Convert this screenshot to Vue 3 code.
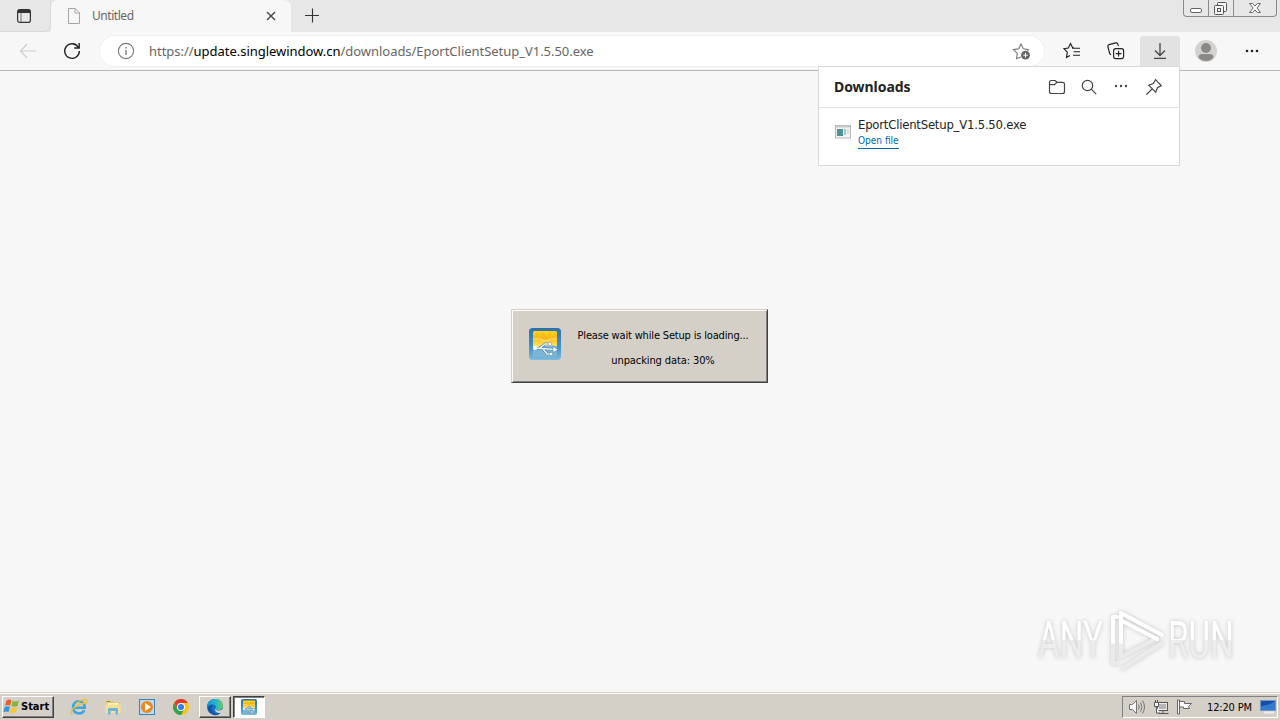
<template>
  <div class="desktop">
    <header class="tab-strip">
      <div class="tab-actions">
        <svg width="16" height="16" viewBox="0 0 16 16">
          <rect x="1.6" y="1.6" width="12.8" height="12.8" rx="2.2" fill="none" stroke="#333" stroke-width="1.2" />
          <path d="M1.5 5V3.5a2 2 0 0 1 2-2h9a2 2 0 0 1 2 2V5z" fill="#333" />
          <path d="M5 5v9" stroke="#777" stroke-width="1" />
        </svg>
      </div>
      <div class="tab">
        <svg class="page-icon" width="14" height="16" viewBox="0 0 14 16" fill="none" stroke="#a5a5a5">
          <path d="M1.5.5h6.800l4.200 4.300v10.700h-11zM8 .5V5h4.500" />
        </svg>
        <span class="tab-title">Untitled</span>
        <svg class="tab-close" width="10" height="10" viewBox="0 0 10 10" stroke="#444" stroke-width="1.4">
          <path d="M1 1l8 8M9 1L1 9" />
        </svg>
      </div>
      <svg class="new-tab" width="16" height="16" viewBox="0 0 16 16" stroke="#333" stroke-width="1.1">
        <path d="M1 8.5h14M8.5 1.5v14" />
      </svg>
      <div class="window-buttons">
        <span class="wb-min">
          <svg width="14" height="16" viewBox="0 0 14 16"><rect x="1.5" y="8.5" width="11" height="4" rx="1.5" fill="#fff" stroke="#666" /></svg>
        </span>
        <span class="wb-max">
          <svg width="16" height="16" viewBox="0 0 16 16" fill="#f5f5f5" stroke="#555">
            <rect x="4.5" y="2.5" width="9" height="9" rx="1" />
            <rect x="1.5" y="5.5" width="9" height="9" rx="1" />
            <rect x="4.5" y="8.5" width="3" height="3" />
          </svg>
        </span>
        <span class="wb-close">
          <svg width="14" height="16" viewBox="0 0 14 16" fill="#fff" stroke="#666">
            <path d="M1.5 3.500h3.200L7 6l2.300-2.500h3.200L9 8l3.500 4.500H9.300L7 10l-2.300 2.500H1.500L5 8z" />
          </svg>
        </span>
      </div>
    </header>

    <nav class="toolbar">
      <span class="tool back">
        <svg width="18" height="16" viewBox="0 0 18 16" fill="none" stroke="#ccc" stroke-width="1.2"><path d="M8 1L1.500 8 8 15M1.500 8H17" /></svg>
      </span>
      <span class="tool reload">
        <svg width="18" height="18" viewBox="0 0 18 18" fill="none" stroke="#222" stroke-width="1.4"><path d="M15.200 5.200A7.300 7.300 0 1 0 16.300 9M16.200 1v5h-5" /></svg>
      </span>
      <div class="address">
        <svg class="info" width="18" height="18" viewBox="0 0 18 18" fill="none" stroke="#777">
          <circle cx="9" cy="9" r="7.6" stroke-width="1.1" />
          <path d="M9 8v5M9 5v1.400" stroke-width="1.3" />
        </svg>
        <span class="url">https://<b>update.singlewindow.cn</b>/downloads/EportClientSetup_V1.5.50.exe</span>
        <svg class="star" width="20" height="18" viewBox="0 0 20 18" fill="none">
          <path d="M9 15l-4.500 1.700.8-5.300L1.500 7.600l5.200-.8L9 2l2.300 4.800 5.200.8-1 1.200" stroke="#777" stroke-width="1.1" />
          <circle cx="13.5" cy="13.2" r="4.4" fill="#666" />
          <path d="M11.200 13.200h4.600M13.500 10.900v4.600" stroke="#fff" />
        </svg>
      </div>
      <span class="tool">
        <svg width="18" height="18" viewBox="0 0 18 18" fill="none" stroke="#222" stroke-width="1.15">
          <path d="M11 5.800H9.700L7.500 1.500 5.300 6 1 6.700l3.300 3.500-.8 5.200 3.500-2M9 6.200h8M10.500 9.700H17M10 13.200h7" />
        </svg>
      </span>
      <span class="tool">
        <svg width="18" height="18" viewBox="0 0 18 18" fill="none" stroke="#222" stroke-width="1.15">
          <rect x="6.6" y="6.6" width="10" height="10" rx="2.2" />
          <path d="M11.600 8.800v5.600M8.800 11.600h5.600M4 12.700l-1.300-1L.9 4.500q-.3-1.500 1.200-1.900L8.800.9q1.400-.3 1.900 1L11.500 4" />
        </svg>
      </span>
      <span class="tool pressed">
        <svg width="16" height="18" viewBox="0 0 16 18" fill="none" stroke="#444" stroke-width="1.3"><path d="M8 1v12M3 8.500l5 5 5-5M2 16.300h12" /></svg>
      </span>
      <span class="tool profile">
        <svg width="22" height="22" viewBox="0 0 22 22">
          <circle cx="11" cy="11" r="11" fill="#d4d2d0" />
          <circle cx="11" cy="8" r="5" fill="#8a8886" />
          <path d="M3.500 17.500q0-3.500 3.500-3.500h8q3.500 0 3.500 3.500Q15.500 21 11 21T3.500 17.500z" fill="#8a8886" />
        </svg>
      </span>
      <span class="tool more">
        <svg width="14" height="4" viewBox="0 0 14 4" fill="#222"><circle cx="2" cy="2" r="1.3" /><circle cx="7" cy="2" r="1.3" /><circle cx="12" cy="2" r="1.3" /></svg>
      </span>
    </nav>

    <main class="page">
      <section class="dialog">
        <svg class="setup-icon" width="32" height="32" viewBox="0 0 32 32">
          <use href="#usb-app" />
        </svg>
        <div class="dialog-text">
          <p class="dialog-main">Please wait while Setup is loading...</p>
          <p class="dialog-progress">unpacking data: {{ progress }}%</p>
        </div>
      </section>
    </main>

    <footer class="taskbar">
      <div class="start">
        <svg width="18" height="17" viewBox="0 0 18 17">
          <path d="M3.500 2.500Q6 .8 8.500 2.300L7.200 7.600Q4.500 6.500 2 7.800z" fill="#ed5b2b" />
          <path d="M9.700 2.800q3 1.400 6.300 0l-1.500 5.300q-3 1.200-6 0z" fill="#83b83a" />
          <path d="M1.700 9Q4.300 7.700 6.900 8.800L5.500 14Q3 12.800.3 14z" fill="#3b91d5" />
          <path d="M8.200 9.300q3 1.200 6 0l-1.400 5q-3 1.500-6 0z" fill="#f8c62e" />
        </svg>
        <span>Start</span>
      </div>
      <div class="quick">
        <svg width="18" height="18" viewBox="0 0 18 18" fill="none">
          <path d="M14.300 12.200Q12.700 15.500 9 15.500 3 15 3 9.300 3.500 3.500 9 3.300q5.500.4 5.800 6.500H4.300" stroke="#3aa4e4" stroke-width="2.6" />
          <path d="M2.500 16.500Q-.5 16 2.500 11 8 6 15.500 5M6 5.500Q14-.5 16.500 2q.9 1.300-.7 3.800" stroke="#efbd3c" stroke-width="1.3" />
        </svg>
        <svg width="18" height="18" viewBox="0 0 18 18">
          <path d="M2 2.500h6l1 1.500h7v11H2z" fill="#e8c766" />
          <path d="M3.500 5h11v5h-11z" fill="#fff6ce" />
          <path d="M1.500 6.500h15V15h-15z" fill="#f8df91" />
          <path d="M4 16.500V11q0-1 1-1h8q1 0 1 1v5.500h-2.500V13h-5v3.500z" fill="#69b6e5" />
          <path d="M3 3.500h3" stroke="#50a44b" />
        </svg>
        <svg width="18" height="18" viewBox="0 0 18 18">
          <rect x="1.5" y="1.5" width="15" height="15" fill="#b9dcf4" stroke="#3b82bd" />
          <circle cx="9" cy="9" r="6" fill="#ef861b" />
          <path d="M7 5l6 4-6 4z" fill="#fff" />
        </svg>
        <svg width="18" height="18" viewBox="0 0 18 18">
          <circle cx="9" cy="9" r="8" fill="#fbc515" />
          <path d="M2.070 5A8 8 0 0 1 15.930 5H9a4 4 0 0 0-3.460 6z" fill="#df3b2f" />
          <path d="M2.070 5A8 8 0 0 0 9 17l3.460-6H5.540z" fill="#33a24b" />
          <circle cx="9" cy="9" r="4" fill="#fff" />
          <circle cx="9" cy="9" r="3.1" fill="#3e7de8" />
        </svg>
      </div>
      <div class="task">
        <svg width="18" height="18" viewBox="0 0 18 18">
          <defs>
            <linearGradient id="edge-top" x2="1"><stop stop-color="#168bd8" /><stop offset=".55" stop-color="#2bb6cc" /><stop offset="1" stop-color="#64cf59" /></linearGradient>
          </defs>
          <circle cx="9" cy="9" r="8" fill="#1673c5" />
          <path d="M1 9Q1.500 1.500 9 1t8 7.300q-.2 3.500-4.500 3.700-3.500 0-2.500-2 .5-3-3-3.500Q3 6.200 1 9z" fill="url(#edge-top)" />
          <path d="M7 6.700q-3.500 5.300 1.500 8.300 3 1.500 6.500-.4Q12 18 8 17-1 13 3 8q1.500-1.500 4-1.300z" fill="#1255a5" />
          <path d="M9.800 9.600q-1.200 2.600 2.500 3 3 .2 5-2l-.2 3.200q-3.300 2-6.100.7-3.200-1.700-1.200-4.900z" fill="#d4d0c8" />
        </svg>
      </div>
      <div class="task active">
        <svg width="16" height="16" viewBox="0 0 32 32">
          <defs>
            <linearGradient id="app-blue" x2="0" y2="1"><stop stop-color="#2b72ad" /><stop offset=".6" stop-color="#4292c7" /><stop offset="1" stop-color="#7fbadc" /></linearGradient>
            <linearGradient id="app-gold" x2="0" y2="1"><stop stop-color="#ffd51b" /><stop offset=".4" stop-color="#ffb515" /><stop offset=".65" stop-color="#ffd13c" /><stop offset="1" stop-color="#fff0a0" /></linearGradient>
            <g id="usb-app">
              <rect width="32" height="32" rx="3.5" fill="url(#app-blue)" />
              <path d="M4 4.500Q4 3 5.500 3h21Q28 3 28 4.500V18Q16 17 4 21z" fill="url(#app-gold)" />
              <path d="M4 11h8l2 1.500h5l2-1.500h7" fill="none" stroke="#fff0a0" stroke-width=".8" />
              <path d="M4 20q11-3 24-2v9q0 2-2 2H6q-2 0-2-2z" fill="#7ab5d6" />
              <path d="M6 20l20 1.500M11 20l5-4h5M14 21l4 5h4" fill="none" stroke="#487fa5" stroke-width="2.6" />
              <path d="M6 20l20 1.500M11 20l5-4h5M14 21l4 5h4" fill="none" stroke="#e9f2f6" stroke-width="1.4" />
              <path d="M24 18.500l5 3.200-5 2.800z" fill="#f8fbfc" stroke="#4b87ad" stroke-width=".6" />
              <circle cx="6" cy="20" r="2" fill="#fff" />
              <circle cx="21" cy="16" r="1.7" fill="#fff" stroke="#568faf" stroke-width=".5" />
              <path d="M20.500 24.500h3v3h-3z" fill="#fff" stroke="#568faf" stroke-width=".5" />
            </g>
          </defs>
          <use href="#usb-app" />
        </svg>
      </div>
      <div class="tray">
        <svg width="18" height="16" viewBox="0 0 18 16" fill="none" stroke="#777">
          <path d="M1.500 5.500h3l4-4v13l-4-4h-3z" fill="#f8f8f8" />
          <path d="M10.500 5.500q1.500 2.500 0 5M12.500 3.500q3 4.500 0 9M14.500 1.500q4 6.500 0 13" />
        </svg>
        <svg class="network" width="18" height="16" viewBox="0 0 18 16" stroke="#555">
          <rect x="4.5" y="3.5" width="10" height="8" fill="#aaa" />
          <rect x="5.5" y="4.5" width="8" height="6" fill="#b5b5b5" stroke="#eee" />
          <path d="M5.500 14.500h10M10 12v2" />
          <path d="M1.500 3.500h4v4h-4zM2.500 1v2M4.500 1v2M3.500 8v6H7" fill="#fff" />
        </svg>
        <svg class="flag" width="17" height="16" viewBox="0 0 17 16" fill="#fff" stroke="#666">
          <path d="M2.500 2.500h6v2h7l-3 3 1 2h-6v-1.500h-5z" />
          <path d="M1.500 1v14h2V1z" />
        </svg>
        <span class="clock">12:20 PM</span>
        <svg class="show-desktop" width="16" height="14" viewBox="0 0 16 14">
          <rect x=".5" y=".5" width="15" height="10" fill="#164eaa" stroke="#7297c4" />
          <path d="M1 6Q9 6 15 1v9H1z" fill="#347bcb" />
          <path d="M4 12.500h10" stroke="#ebeff3" stroke-width="2" />
        </svg>
      </div>
    </footer>

    <aside class="downloads">
      <div class="downloads-head">
        <h1>Downloads</h1>
        <svg width="18" height="16" viewBox="0 0 18 16" fill="none" stroke="#444" stroke-width="1.2">
          <path d="M1.500 3.500q0-2 2-2h3.600L9 3.300h5.500q2 0 2 2v7.200q0 2-2 2h-11q-2 0-2-2zM1.500 5.600h5L9 3.300" />
        </svg>
        <svg class="search" width="16" height="16" viewBox="0 0 16 16" fill="none" stroke="#444" stroke-width="1.2">
          <circle cx="6.5" cy="6.5" r="5.2" /><path d="M10.200 10.200l5 5" />
        </svg>
        <svg width="14" height="16" viewBox="0 0 14 16" fill="#444"><circle cx="2" cy="7" r="1.2" /><circle cx="7" cy="7" r="1.2" /><circle cx="12" cy="7" r="1.2" /></svg>
        <svg class="pin" width="18" height="18" viewBox="0 0 18 18" fill="none" stroke="#444" stroke-width="1.2">
          <path d="M10.500 1.700l5.800 5.800-3.800 2.200-1.800 4.500-6.900-6.900 4.500-1.800zM7.200 10.800L1.500 16.500" />
        </svg>
      </div>
      <div class="download-item">
        <svg width="16" height="14" viewBox="0 0 16 14">
          <rect x=".5" y=".5" width="15" height="12.5" fill="#f4f4f4" stroke="#b9b9b9" />
          <path d="M1 1.500h14" stroke="#c5c8ca" stroke-width="2" />
          <path d="M2 4h6v7H2z" fill="#4d9190" />
          <path d="M9 4h2v6H9z" fill="#a4c5d8" />
          <path d="M12 4h2v5h-2z" fill="#d7dfe4" />
        </svg>
        <div class="download-info">
          <span class="file-name">EportClientSetup_V1.5.50.exe</span>
          <span class="open-file">Open file</span>
        </div>
      </div>
    </aside>

    <div class="watermark">
      <span class="any">ANY</span>
      <svg width="60" height="64" viewBox="0 0 60 64" fill="none" stroke-linejoin="round" stroke-linecap="round">
        <path d="M5 34v21h4M13 34v15l36-19M15 60l39-25" stroke="#ebebeb" stroke-width="4" />
        <path d="M9 9H5v25M13 34V5l41 22M14 13l35 18" stroke="#fff" stroke-width="4" />
      </svg>
      <span class="run">RUN</span>
    </div>
  </div>
</template>

<script setup>
import { ref } from 'vue'

const progress = ref(30)
</script>

<style>
body {
  margin: 0;
  overflow: hidden;
}
</style>

<style scoped>
.desktop {
  position: relative;
  display: flex;
  flex-direction: column;
  width: 1280px;
  height: 720px;
  overflow: hidden;
  background: #f7f7f7;
  font-family: "DejaVu Sans Condensed", "DejaVu Sans", sans-serif;
  font-stretch: condensed;
  color: #111;
}

.desktop * {
  box-sizing: border-box;
}

svg {
  display: block;
  flex: none;
}

.desktop span {
  white-space: nowrap;
}

.tab-strip {
  display: flex;
  height: 32px;
  background: #e7e7e7;
}

.tab-actions {
  width: 51px;
  padding: 8px 16px;
  border-bottom: 1px solid #d8d8d8;
  border-right: 1px solid #dadada;
  border-radius: 0 0 7px 0;
}

.tab {
  display: flex;
  align-items: center;
  width: 240px;
  padding: 0 15px 0 16px;
  background: #f7f7f7;
  border-radius: 7px 7px 0 0;
}

.tab-title {
  flex: 1;
  margin-left: 11px;
  padding-bottom: 1px;
  font-family: "Noto Sans", sans-serif;
  font-size: 12px;
  letter-spacing: -0.45px;
  line-height: 16px;
  color: #666;
}

.new-tab {
  margin: 7px 0 0 13px;
}

.window-buttons {
  display: flex;
  width: 94px;
  height: 17px;
  margin: 0 3px 0 auto;
  border: 1px solid #8b8b8b;
  border-top: 0;
  border-radius: 0 0 4px 4px;
}

.window-buttons span {
  display: flex;
  justify-content: center;
}

.window-buttons .wb-min {
  width: 24px;
}

.window-buttons .wb-max {
  width: 26px;
  border: 1px solid #8b8b8b;
  border-width: 0 1px;
}

.window-buttons .wb-close {
  flex: 1;
}

.toolbar {
  display: flex;
  align-items: center;
  height: 39px;
  padding: 0 8px 1px;
  border-bottom: 1px solid #b5b5b5;
  background: #f7f7f7;
}

.tool {
  display: flex;
  align-items: center;
  justify-content: center;
  width: 40px;
  height: 30px;
  margin-right: 4px;
}

.reload {
  margin-right: 8px;
}

.pressed {
  margin-right: 6px;
  border-radius: 3px 3px 0 0;
  background: #e2e2e2;
}

.profile {
  margin-right: 6px;
}

.more {
  margin-right: 0;
}

.address {
  display: flex;
  align-items: center;
  width: 944px;
  height: 30px;
  margin-right: 8px;
  padding: 0 12px 0 17px;
  border-radius: 15px;
  background: #fff;
  box-shadow: 0 0 0 1px #f1f1f1;
}

.url {
  flex: 1;
  margin-left: 14px;
  font-family: "Noto Sans", sans-serif;
  font-size: 13px;
  letter-spacing: -0.03px;
  color: #666;
}

.url b {
  font-weight: 400;
  color: #000;
}

.page {
  display: flex;
  align-items: flex-start;
  justify-content: center;
  flex: 1;
  padding-top: 238px;
}

.dialog {
  display: flex;
  width: 257px;
  height: 74px;
  margin-right: 1px;
  padding: 18px 0 0 17px;
  border: 1px solid;
  border-color: #d4d0c8 #404040 #404040 #d4d0c8;
  background: #d4d0c8;
  box-shadow: inset 1px 1px #fff, inset -1px -1px #808080;
}

.dialog-text {
  width: 172px;
  margin-left: 16px;
  padding-top: 1px;
  font-size: 11px;
  line-height: 14px;
  text-align: center;
  white-space: nowrap;
  color: #000;
}

.dialog-text p {
  margin: 0;
}

.dialog-main {
  letter-spacing: -0.17px;
}

.dialog-progress {
  padding-top: 11px;
  letter-spacing: -0.1px;
}

.taskbar {
  display: flex;
  align-items: center;
  height: 28px;
  padding: 1px 2px;
  border-top: 1px solid #d4d0c8;
  background: #d4d0c8;
  box-shadow: inset 0 1px #fff;
}

.start,
.task {
  display: flex;
  align-items: center;
  height: 22px;
  border: 1px solid;
  border-color: #fff #404040 #404040 #fff;
  box-shadow: inset -1px -1px #808080;
}

.start {
  width: 52px;
  font-size: 11px;
  font-weight: 700;
  color: #000;
}

.quick {
  display: flex;
  gap: 16px;
  width: 145px;
  padding-left: 16px;
}

.task {
  justify-content: center;
  width: 32px;
  margin-right: 2px;
}

.task.active {
  border-color: #404040 #fff #fff #404040;
  background: #fff;
  box-shadow: inset 1px 1px #808080;
}

.tray {
  display: flex;
  align-items: center;
  width: 156px;
  height: 22px;
  margin-left: auto;
  padding-left: 5px;
  border: 1px solid;
  border-color: #808080 #fff #fff #808080;
}

.network {
  margin-left: 7px;
}

.flag {
  margin-left: 5px;
}

.clock {
  width: 46px;
  margin-left: 14px;
  padding-top: 1px;
  font-size: 11px;
  letter-spacing: -0.15px;
  color: #000;
}

.show-desktop {
  margin-left: 7px;
}

.downloads {
  position: absolute;
  top: 66px;
  left: 818px;
  width: 362px;
  height: 100px;
  border: 1px solid #d8d8d8;
  background: #fff;
}

.downloads-head {
  display: flex;
  align-items: center;
  gap: 16px;
  height: 41px;
  padding: 0 16px 0 15px;
  border-bottom: 1px solid #e3e3e3;
}

.downloads h1 {
  flex: 1;
  margin: 0;
  font-family: "Noto Sans", sans-serif;
  font-size: 14px;
  font-weight: 700;
  letter-spacing: -0.05px;
  line-height: 18px;
  color: #222;
}

.downloads .search {
  margin: 0 1px 0 -1px;
}

.downloads .pin {
  margin-left: 1px;
}

.download-item {
  display: flex;
  padding: 9px 16px;
}

.download-item svg {
  margin-top: 8px;
}

.download-info {
  display: flex;
  flex-direction: column;
  align-items: flex-start;
  margin-left: 7px;
}

.file-name {
  font-size: 13px;
  letter-spacing: -0.23px;
  line-height: 16px;
  color: #222;
}

.open-file {
  border-bottom: 1px solid #0067b8;
  font-size: 10px;
  line-height: 15px;
  color: #0067b8;
}

.watermark {
  position: absolute;
  top: 608px;
  left: 1038px;
  display: flex;
  align-items: center;
  height: 64px;
  font-family: Roboto, sans-serif;
  font-size: 52px;
  font-stretch: normal;
  line-height: 64px;
  filter: drop-shadow(0 0 2px #c4c4c4);
}

.any,
.run {
  flex: none;
  width: 100px;
  padding-top: 2px;
  color: transparent;
  background: linear-gradient(#fff 50%, #ededed 50%);
  background-clip: text;
  transform: scaleX(.64);
  transform-origin: left;
}

.any {
  margin-right: -30px;
}
</style>
